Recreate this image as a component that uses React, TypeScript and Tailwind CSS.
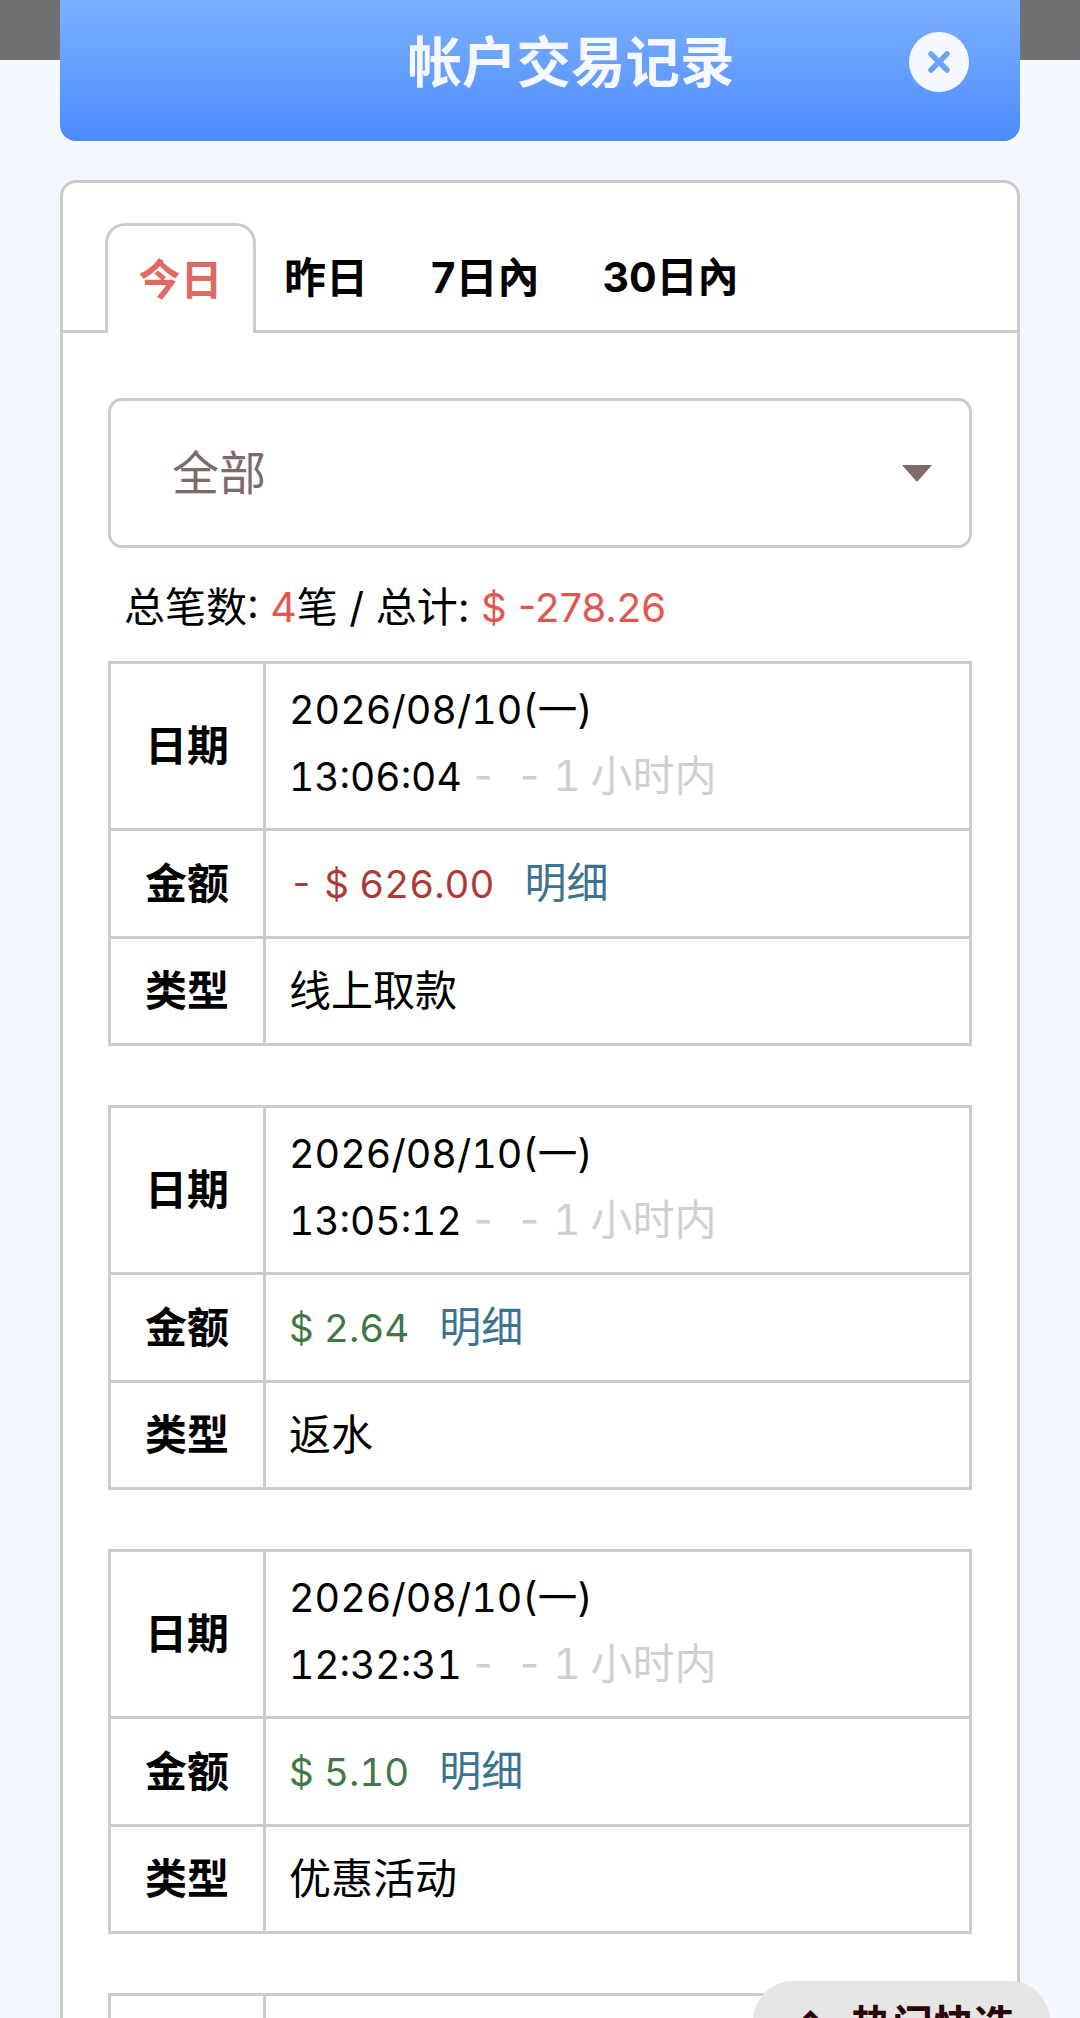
import React from 'react';

type Record = {
  time: string;
  amount: string;
  amountClass: string;
  kind: string;
};

const records: Record[] = [
  { time: '13:06:04', amount: '- $ 626.00', amountClass: 'text-[#ad3a36]', kind: '线上取款' },
  { time: '13:05:12', amount: '$ 2.64', amountClass: 'text-[#3f7845]', kind: '返水' },
  { time: '12:32:31', amount: '$ 5.10', amountClass: 'text-[#3f7845]', kind: '优惠活动' },
  { time: '12:10:08', amount: '$ 340.00', amountClass: 'text-[#3f7845]', kind: '线上存款' },
];

const cellLabel = 'w-[155px] border-[3px] border-[#cccccc] text-center font-bold align-middle';
const cellValue = 'border-[3px] border-[#cccccc] pl-[23px] align-middle';

const RecordTable = ({ item }: { item: Record }) => (
  <table className="mb-[59px] w-[864px] table-fixed border-collapse bg-white text-[42px] leading-[66px] text-black tabular-nums">
    <tbody>
      <tr className="h-[167px]">
        <td className={cellLabel}>日期</td>
        <td className={`${cellValue} pb-[5px]`}>
          <div className="text-[39.5px]">2026/08/10(一)</div>
          <div className="text-[39px]">
            {item.time}
            <span className="ml-[8px] text-[42px] text-[#d0d0d0]">
              -<span className="ml-[19px]">-</span>
              <span className="ml-[10px]">1</span>
              <span className="ml-[10px]">小时内</span>
            </span>
          </div>
        </td>
      </tr>
      <tr className="h-[108px]">
        <td className={cellLabel}>金额</td>
        <td className={cellValue}>
          <span className={`text-[38.5px] ${item.amountClass}`}>{item.amount}</span>
          <span className="ml-[30px] text-[#3b7391]">明细</span>
        </td>
      </tr>
      <tr className="h-[107px]">
        <td className={cellLabel}>类型</td>
        <td className={cellValue}>{item.kind}</td>
      </tr>
    </tbody>
  </table>
);

export default function App() {
  return (
    <div className="relative h-[2018px] w-[1080px] overflow-hidden bg-[#f5f8ff] font-['Inter','Noto_Sans_CJK_SC',sans-serif]">
      {/* dimmed page behind the dialog */}
      <div className="absolute left-0 top-0 h-[60px] w-full bg-[#707173]" />

      <div className="relative mx-[60px] flex flex-col">
        <header className="relative flex h-[141px] items-center justify-center rounded-b-[16px] bg-gradient-to-b from-[#7cb0ff] to-[#4c8bff] pb-[16px] pl-[62px]">
          <h1 className="text-[54.5px] font-bold leading-none text-[#f5f8ff]">帐户交易记录</h1>
          <button className="absolute left-[849px] top-[32px] flex h-[60px] w-[60px] items-center justify-center rounded-full bg-[#f5f8ff]">
            <svg width="22" height="22" viewBox="0 0 22 22" fill="none">
              <path d="M3 3 L19 19 M19 3 L3 19" stroke="#6aa3fb" strokeWidth="5.5" strokeLinecap="round" />
            </svg>
          </button>
        </header>

        <section className="mt-[39px] rounded-t-[16px] border-[3px] border-[#cccccc] bg-white pb-[40px]">
          <nav className="flex h-[150px] items-end border-b-[3px] border-[#cccccc] pl-[42px] text-[42px] font-bold leading-none text-black">
            <div className="relative -mb-[3px] flex h-[110px] w-[151px] items-center justify-center rounded-t-[20px] border-[3px] border-b-0 border-[#cccccc] bg-white text-[#dd6a63]">
              今日
            </div>
            <div className="flex h-[107px] items-center gap-[63px] pl-[28px] pt-[2px]">
              <span>昨日</span>
              <span>7日內</span>
              <span className="text-[41px]">30日內</span>
            </div>
          </nav>

          <div className="px-[45px] pt-[65px]">
            <div className="flex h-[150px] w-[864px] items-center justify-between rounded-[14px] border-[3px] border-[#cccccc] pl-[61px] pr-[37px]">
              <span className="text-[47px] text-[#7e6a6a]">全部</span>
              <span className="h-0 w-0 border-x-[15px] border-t-[17px] border-x-transparent border-t-[#7e6a6a]" />
            </div>

            <p className="mb-[23px] mt-[29px] pl-[16px] text-[41px] leading-[60px] text-black">
              总笔数: <span className="text-[#e0574f]">4</span>笔 / 总计:{' '}
              <span className="text-[40px] text-[#e0574f]">$ -278.26</span>
            </p>

            {records.map((item) => (
              <RecordTable key={item.time} item={item} />
            ))}
          </div>
        </section>
      </div>

      {/* floating hot picks pill */}
      <div className="absolute left-[753px] top-[1981px] flex h-[80px] w-[297px] items-start justify-center gap-[24px] rounded-t-[40px] bg-[#e5e5e5] pl-[6px] pt-[24px] text-[41px] font-bold leading-none text-[#2a0505]">
        <span>⌃</span>
        <span>热门快选</span>
      </div>
    </div>
  );
}
